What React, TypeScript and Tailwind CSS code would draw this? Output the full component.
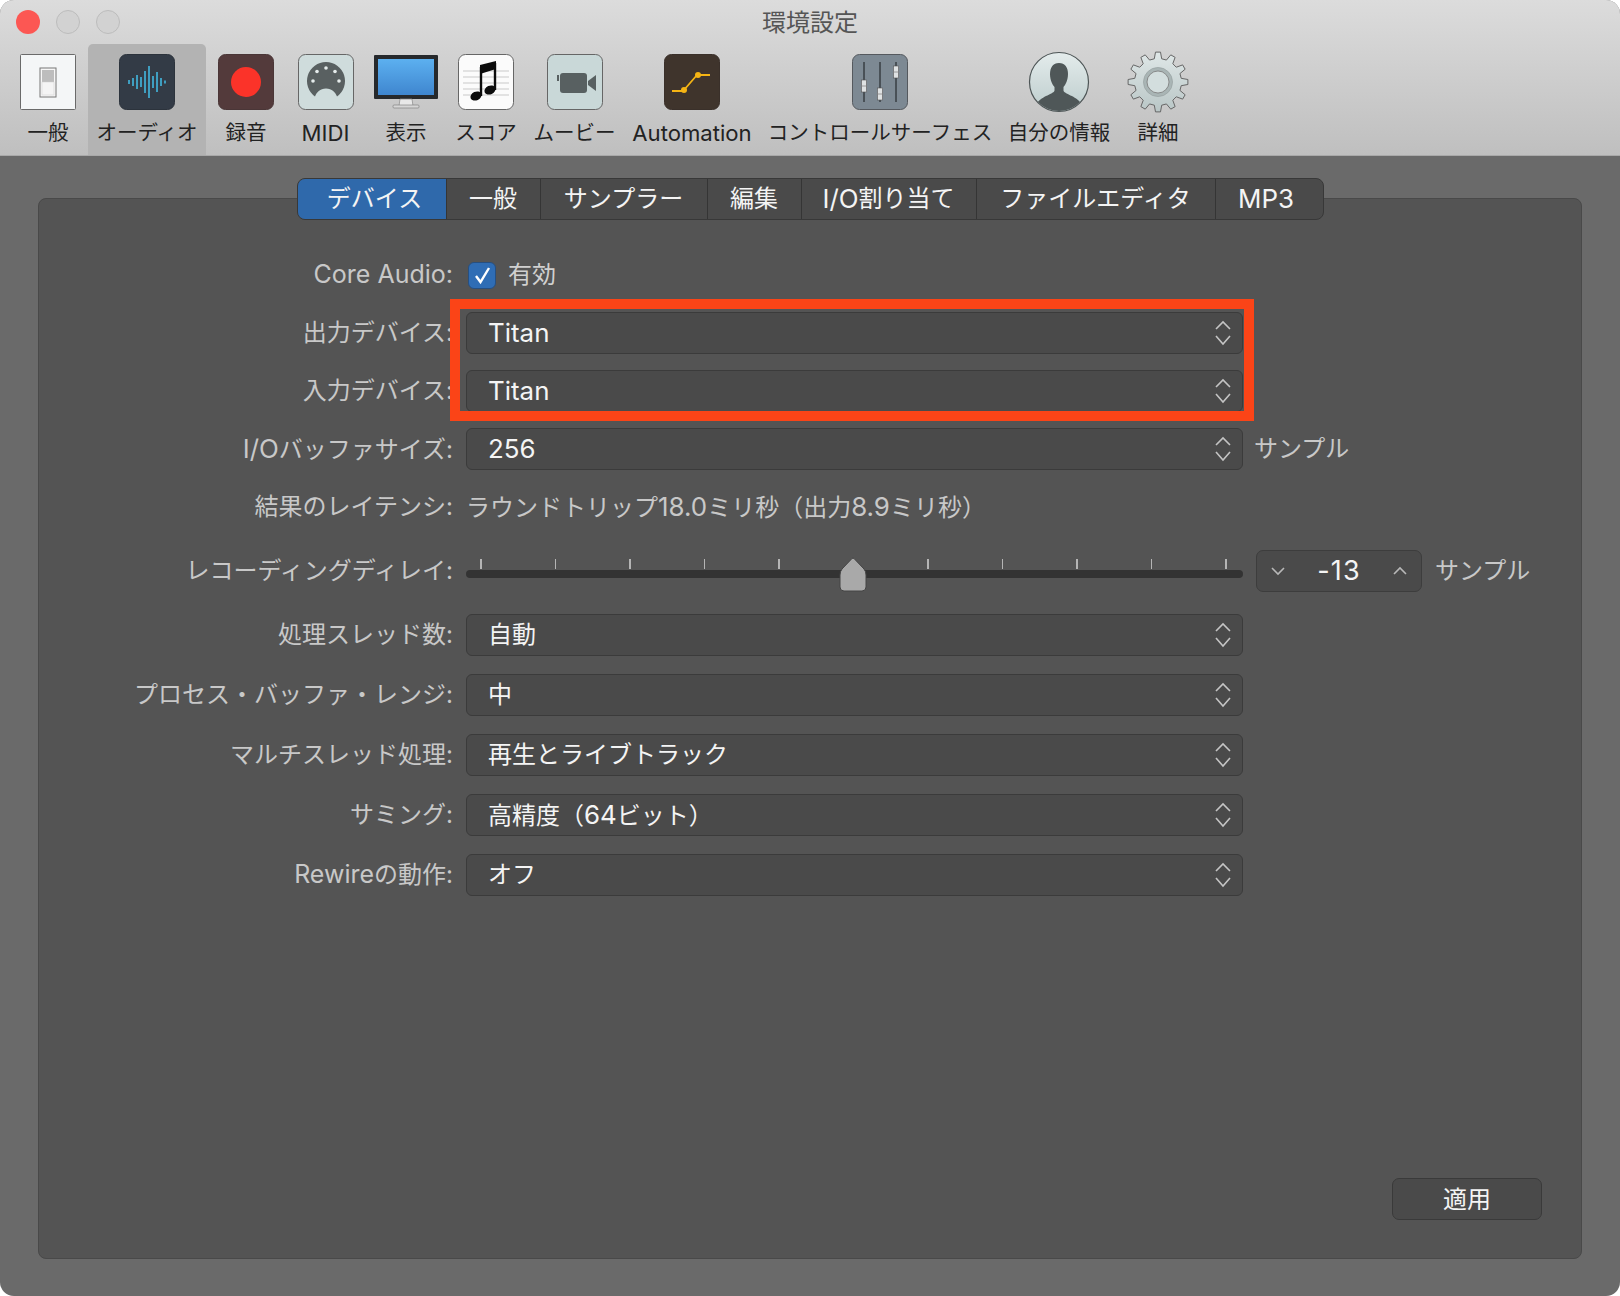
import React from 'react'

const FONT = 'font-["Inter","Noto_Sans_CJK_JP",sans-serif]'

// Latin runs look a bit bigger than the Japanese next to them
function Lat({ children }: { children: React.ReactNode }) {
  return <span className="text-[1.08em]">{children}</span>
}

function TileFrame({ fill, stroke = '#555', rx = 7, children }: { fill: string; stroke?: string; rx?: number; children: React.ReactNode }) {
  return (
    <svg width="58" height="58" viewBox="0 0 58 58">
      <rect x="1.5" y="1.5" width="55" height="55" rx={rx} fill={fill} stroke={stroke} />
      {children}
    </svg>
  )
}

function GeneralIcon() {
  return (
    <TileFrame fill="#f4f6f7" stroke="#6a6a6a" rx={1}>
      <rect x="21" y="15" width="16" height="29" fill="#f6f6f6" stroke="#777" strokeWidth="1" />
      <rect x="23" y="17" width="12" height="12" fill="#bdbdbd" />
      <rect x="23" y="29" width="12" height="13" fill="#f4f4f4" stroke="#cfcfcf" strokeWidth="0.5" />
    </TileFrame>
  )
}

function AudioIcon() {
  const bars = [[11, 2], [15, 4], [19, 7], [23, 5], [27, 11], [31, 16], [35, 6], [39, 10], [43, 4], [47, 1.5]]
  return (
    <TileFrame fill="#333b46" stroke="#2c333c">
      {bars.map(([x, h]) => (
        <line key={x} x1={x} x2={x} y1={29 - h} y2={29 + h} stroke="#45c0ea" strokeWidth="1.5" />
      ))}
    </TileFrame>
  )
}

function RecordIcon() {
  return (
    <TileFrame fill="#533a3b" stroke="#4a3637">
      <ellipse cx="29" cy="29" rx="15" ry="15" fill="#fb3329" />
    </TileFrame>
  )
}

function MidiIcon() {
  return (
    <TileFrame fill="#cfdcdc" stroke="#666">
      <path d="M29 9a19 19 0 0 1 11 34.5c-1.500-4-5-8-11-8s-9.500 4-11 8A19 19 0 0 1 29 9z" fill="#596061" />
      {[[29, 15], [20, 18.500], [38, 18.500], [16, 28], [42, 28]].map(([cx, cy]) => (
        <circle key={cx} cx={cx} cy={cy} r="1.800" fill="#e6ecec" />
      ))}
    </TileFrame>
  )
}

function DisplayIcon() {
  return (
    <svg width="66" height="56" viewBox="0 0 66 56">
      <defs>
        <linearGradient id="screen" x1="0" y1="0" x2="0" y2="1">
          <stop offset="0" stopColor="#5cb0f0" />
          <stop offset="1" stopColor="#3f86cf" />
        </linearGradient>
      </defs>
      <rect x="1" y="1" width="64" height="44" rx="1" fill="#26292c" />
      <rect x="5" y="5" width="56" height="36" fill="url(#screen)" />
      <path d="M27 45h12l1 7H26z" fill="#e8e8e8" stroke="#888" strokeWidth="0.7" />
      <rect x="20" y="51" width="26" height="3" rx="1" fill="#d6d6d6" stroke="#777" strokeWidth="0.6" />
    </svg>
  )
}

function ScoreIcon() {
  return (
    <TileFrame fill="#fbfbfb" stroke="#666">
      {[18, 24, 30, 36, 42].map((y) => (
        <line key={y} x1="6" x2="52" y1={y} y2={y} stroke="#c9c9c9" strokeWidth="1" />
      ))}
      <path d="M38 10v27" fill="none" stroke="#0c0c0c" strokeWidth="2.400" />
      <path d="M24 14v29" fill="none" stroke="#0c0c0c" strokeWidth="2.400" />
      <path d="M23 12l16-4v8l-16 5z" fill="#0c0c0c" />
      <ellipse cx="19" cy="43" rx="5.800" ry="4.300" fill="#0c0c0c" transform="rotate(-25 19 43)" />
      <ellipse cx="33" cy="37" rx="5.800" ry="4.300" fill="#0c0c0c" transform="rotate(-25 33 37)" />
    </TileFrame>
  )
}

function MovieIcon() {
  return (
    <TileFrame fill="#c9d8d8" stroke="#666">
      <rect x="14" y="20" width="27" height="20" rx="3" fill="#586061" />
      <rect x="11" y="22" width="2" height="6" fill="#586061" />
      <path d="M42 28l8-6v16l-8-6z" fill="#586061" />
    </TileFrame>
  )
}

function AutomationIcon() {
  return (
    <TileFrame fill="#3f342c" stroke="#3a302a">
      <path d="M9 38h11M21 37l13-15M36 22h11" fill="none" stroke="#f5b414" strokeWidth="1.800" />
      <circle cx="21" cy="37" r="3" fill="#f5b414" />
      <circle cx="35" cy="22" r="3" fill="#f5b414" />
    </TileFrame>
  )
}

function ControlIcon() {
  const faders = [[13, 33], [29, 41], [45, 19]]
  return (
    <TileFrame fill="#7d8993" stroke="#55595e">
      {faders.map(([x, y]) => (
        <g key={x}>
          <line x1={x} x2={x} y1="9" y2="49" stroke="#16181a" strokeWidth="1" />
          <rect x={x - 2.5} y={y - 6} width="5" height="12" fill="#dfe2e3" stroke="#555" strokeWidth="0.6" />
          <line x1={x - 2.5} x2={x + 2.5} y1={y} y2={y} stroke="#888" strokeWidth="0.8" />
        </g>
      ))}
    </TileFrame>
  )
}

function UserIcon() {
  return (
    <svg width="62" height="62" viewBox="0 0 62 62">
      <defs>
        <linearGradient id="avatar" x1="0" y1="0" x2="0" y2="1">
          <stop offset="0" stopColor="#e4ecec" />
          <stop offset="1" stopColor="#bccccc" />
        </linearGradient>
        <clipPath id="avatarClip">
          <circle cx="31" cy="31" r="29" />
        </clipPath>
      </defs>
      <circle cx="31" cy="31" r="29.500" fill="url(#avatar)" stroke="#4d5556" strokeWidth="1.200" />
      <g clipPath="url(#avatarClip)">
        <path d="M31 12c6 0 9 4.500 9 11 0 6-2.500 11-4.500 13v3.500c0 3 13 6 17 12 1 2 1.500 5 1.500 9H8c0-4 .5-7 1.500-9 4-6 17-9 17-12V36C24.500 34 22 29 22 23c0-6.500 3-11 9-11z" fill="#4f5758" />
      </g>
    </svg>
  )
}

function gearPath() {
  const teeth = 12
  const outer = 30
  const inner = 23.5
  const parts: string[] = []
  for (let i = 0; i < teeth; i++) {
    const step = (Math.PI * 2) / teeth
    const a = i * step - Math.PI / 2
    const pts: [number, number][] = [
      [inner, a - step * 0.3],
      [outer, a - step * 0.16],
      [outer, a + step * 0.16],
      [inner, a + step * 0.3],
    ]
    pts.forEach(([r, t], j) => {
      const x = (32 + r * Math.cos(t)).toFixed(2)
      const y = (32 + r * Math.sin(t)).toFixed(2)
      parts.push(`${i === 0 && j === 0 ? 'M' : 'L'}${x} ${y}`)
    })
  }
  return parts.join(' ') + 'Z'
}

function GearIcon() {
  return (
    <svg width="64" height="64" viewBox="0 0 64 64">
      <defs>
        <linearGradient id="gear" x1="0" y1="0" x2="0" y2="1">
          <stop offset="0" stopColor="#dfe7e7" />
          <stop offset="1" stopColor="#b9c6c6" />
        </linearGradient>
      </defs>
      <path d={gearPath()} fill="url(#gear)" stroke="#666" strokeWidth="1" strokeLinejoin="round" />
      <circle cx="32" cy="32" r="14.500" fill="#a9b5b5" stroke="#9aa5a5" strokeWidth="0.8" />
      <circle cx="32" cy="32" r="11" fill="#d3dede" stroke="#777" strokeWidth="0.8" />
    </svg>
  )
}

const toolbarItems = [
  { key: 'general', label: '一般', icon: <GeneralIcon />, width: 'w-[80px]' },
  { key: 'audio', label: 'オーディオ', icon: <AudioIcon />, width: 'w-[118px]', selected: true },
  { key: 'record', label: '録音', icon: <RecordIcon />, width: 'w-[80px]' },
  { key: 'midi', label: <Lat>MIDI</Lat>, icon: <MidiIcon />, width: 'w-[79px]' },
  { key: 'display', label: '表示', icon: <DisplayIcon />, width: 'w-[82px]' },
  { key: 'score', label: 'スコア', icon: <ScoreIcon />, width: 'w-[78px]' },
  { key: 'movie', label: 'ムービー', icon: <MovieIcon />, width: 'w-[99px]' },
  { key: 'automation', label: <Lat>Automation</Lat>, icon: <AutomationIcon />, width: 'w-[136px]' },
  { key: 'control', label: 'コントロールサーフェス', icon: <ControlIcon />, width: 'w-[240px]' },
  { key: 'user', label: '自分の情報', icon: <UserIcon />, width: 'w-[118px]' },
  { key: 'detail', label: '詳細', icon: <GearIcon />, width: 'w-[80px]' },
]

const tabs = [
  { key: 'device', label: 'デバイス', width: 'w-[149px] pl-[6px]', active: true },
  { key: 'general', label: '一般', width: 'w-[94px]' },
  { key: 'sampler', label: 'サンプラー', width: 'w-[167px]' },
  { key: 'edit', label: '編集', width: 'w-[94px]' },
  { key: 'io', label: <><Lat>I/O</Lat>割り当て</>, width: 'w-[175px]' },
  { key: 'file', label: 'ファイルエディタ', width: 'w-[239px]' },
  { key: 'mp3', label: <Lat>MP3</Lat>, width: 'w-[107px] pr-[6px]' },
]

function Updown() {
  return (
    <svg width="16" height="26" viewBox="0 0 16 26" fill="none" stroke="#c4c4c4" strokeWidth="1.600">
      <path d="M1 9l7-7 7 7M1 16l7 8 7-8" />
    </svg>
  )
}

function Select({ children }: { children: React.ReactNode }) {
  return (
    <div className="flex h-[42px] w-[777px] items-center justify-between rounded-[6px] border border-[#3b3b3b] bg-[#4a4a4a] pl-[21px] pr-[11px] text-[24px] text-[#f4f4f4]">
      <span>{children}</span>
      <Updown />
    </div>
  )
}

function Row({ label, className, children }: { label: React.ReactNode; className: string; children: React.ReactNode }) {
  return (
    <div className={`flex h-[42px] items-center ${className}`}>
      <div className="w-[414px] shrink-0 whitespace-nowrap text-right text-[24px] text-[#c8c8c8]">{label}</div>
      <div className="ml-[13px] flex items-center">{children}</div>
    </div>
  )
}

function DelaySlider() {
  const ticks = [0, 1, 2, 3, 4, 5, 6, 7, 8, 9, 10]
  return (
    <div className="relative h-[42px] w-[777px]">
      <div className="flex h-[19px] items-end justify-between pl-[14px] pr-[16px]">
        {ticks.map((t) => (
          <div key={t} className="h-[10px] w-[1.5px] bg-[#b5b5b5]" />
        ))}
      </div>
      <div className="mt-[1px] h-[8px] rounded-full bg-[#333333]" />
      <svg className="absolute left-[372px] top-[7px]" width="30" height="35" viewBox="0 0 30 35">
        <path d="M14 1.500 Q15 0.500 16 1.500 L26 12 Q28 14.500 28 18 V30 Q28 34 24 34 H6 Q2 34 2 30 V18 Q2 14.500 4 12 Z" fill="#a9a9a9" stroke="#444" strokeWidth="1" />
      </svg>
    </div>
  )
}

function Stepper() {
  return (
    <div className="flex h-[42px] w-[166px] items-center justify-between rounded-[7px] border border-[#3d3d3d] bg-[#4a4a4a] px-[13px] text-[27px] tracking-[0.04em] text-[#f4f4f4]">
      <svg width="16" height="10" viewBox="0 0 16 10" fill="none" stroke="#b8b8b8" strokeWidth="1.600">
        <path d="M2 2l6 6 6-6" />
      </svg>
      <span>-13</span>
      <svg width="16" height="10" viewBox="0 0 16 10" fill="none" stroke="#b8b8b8" strokeWidth="1.600">
        <path d="M2 8l6-6 6 6" />
      </svg>
    </div>
  )
}

export default function App() {
  return (
    <div className={`h-[1296px] w-[1620px] bg-white ${FONT}`}>
      <div className="flex h-full flex-col overflow-hidden rounded-[14px] bg-[#6a6a6a]">
        {/* Toolbar */}
        <div className="h-[156px] shrink-0 border-b border-[#a9a9a9] bg-gradient-to-b from-[#dcdcdc] to-[#bfbfbf]">
          <div className="grid h-[44px] grid-cols-[1fr_auto_1fr] items-center">
            <div className="flex gap-[16px] pl-[16px]">
              <div className="h-[24px] w-[24px] rounded-full bg-[#fc5753]" />
              <div className="h-[24px] w-[24px] rounded-full border border-[#bcbcbc] bg-[#d2d2d2]" />
              <div className="h-[24px] w-[24px] rounded-full border border-[#bcbcbc] bg-[#d2d2d2]" />
            </div>
            <div className="pt-[2px] text-[24px] text-[#555555]">環境設定</div>
            <div />
          </div>
          <div className="flex pl-[8px]">
            {toolbarItems.map((item) => (
              <div
                key={item.key}
                className={`flex h-[111px] shrink-0 flex-col items-center pt-[8px] ${item.width} ${item.selected ? 'rounded-t-[5px] bg-[#b3b3b3]' : ''}`}
              >
                <div className="flex h-[60px] items-center justify-center">{item.icon}</div>
                <div className="whitespace-nowrap pt-[1px] text-[20.5px] leading-[40px] text-[#222222]">{item.label}</div>
              </div>
            ))}
          </div>
        </div>

        {/* Panel */}
        <div className="flex flex-1 flex-col px-[38px] pb-[37px] pt-[42px]">
          <div className="flex flex-1 flex-col rounded-[8px] border border-[#494949] bg-[#545454]">
            <div className="-mt-[21px] flex h-[42px] self-center overflow-hidden rounded-[8px] border border-[#383838] bg-[#4a4a4a] text-[24px] text-[#f4f4f4]">
              {tabs.map((tab) => (
                <div
                  key={tab.key}
                  className={`flex items-center justify-center border-r border-[#353535] last:border-r-0 ${tab.width} ${tab.active ? 'bg-[#2f69ab]' : ''}`}
                >
                  {tab.label}
                </div>
              ))}
            </div>

            <div className="relative mt-[34px]">
              <Row label={<span className="text-[25px]">Core Audio:</span>} className="">
                <div className="ml-[2px] flex h-[27px] w-[28px] items-center justify-center rounded-[6px] border border-[#274f80] bg-[#2f6db5]">
                  <svg width="19" height="19" viewBox="0 0 19 19" fill="none" stroke="#ffffff" strokeWidth="2.400">
                    <path d="M3 10l4.500 6L16 2" />
                  </svg>
                </div>
                <span className="ml-[12px] text-[24px] text-[#d0d0d0]">有効</span>
              </Row>
              <Row label="出力デバイス:" className="mt-[16px]">
                <Select><Lat>Titan</Lat></Select>
              </Row>
              <Row label="入力デバイス:" className="mt-[16px]">
                <Select><Lat>Titan</Lat></Select>
              </Row>
              <Row label={<><Lat>I/O</Lat>バッファサイズ:</>} className="mt-[16px]">
                <Select><Lat>256</Lat></Select>
                <span className="ml-[11px] text-[24px] text-[#c8c8c8]">サンプル</span>
              </Row>
              <Row label="結果のレイテンシ:" className="mt-[16px]">
                <span className="whitespace-nowrap text-[24px] text-[#c8c8c8]">
                  ラウンドトリップ<Lat>18.0</Lat>ミリ秒（出力<Lat>8.9</Lat>ミリ秒）
                </span>
              </Row>
              <Row label="レコーディングディレイ:" className="mt-[22px]">
                <DelaySlider />
                <div className="ml-[13px]">
                  <Stepper />
                </div>
                <span className="ml-[13px] whitespace-nowrap text-[24px] text-[#c8c8c8]">サンプル</span>
              </Row>
              <Row label="処理スレッド数:" className="mt-[22px]">
                <Select>自動</Select>
              </Row>
              <Row label="プロセス・バッファ・レンジ:" className="mt-[18px]">
                <Select>中</Select>
              </Row>
              <Row label="マルチスレッド処理:" className="mt-[18px]">
                <Select>再生とライブトラック</Select>
              </Row>
              <Row label="サミング:" className="mt-[18px]">
                <Select>高精度（<Lat>64</Lat>ビット）</Select>
              </Row>
              <Row label={<><span className="text-[25px]">Rewire</span>の動作:</>} className="mt-[18px]">
                <Select>オフ</Select>
              </Row>

              {/* Red annotation over the two device rows */}
              <div className="absolute left-[411px] top-[45px] h-[122px] w-[804px] border-[10px] border-[#fb4417]" />
            </div>

            <div className="mb-[38px] mr-[39px] mt-auto flex h-[42px] w-[150px] items-center justify-center self-end rounded-[7px] border border-[#3a3a3a] bg-[#4a4a4a] pt-[2px] text-[24px] text-[#f4f4f4]">
              適用
            </div>
          </div>
        </div>
      </div>
    </div>
  )
}
